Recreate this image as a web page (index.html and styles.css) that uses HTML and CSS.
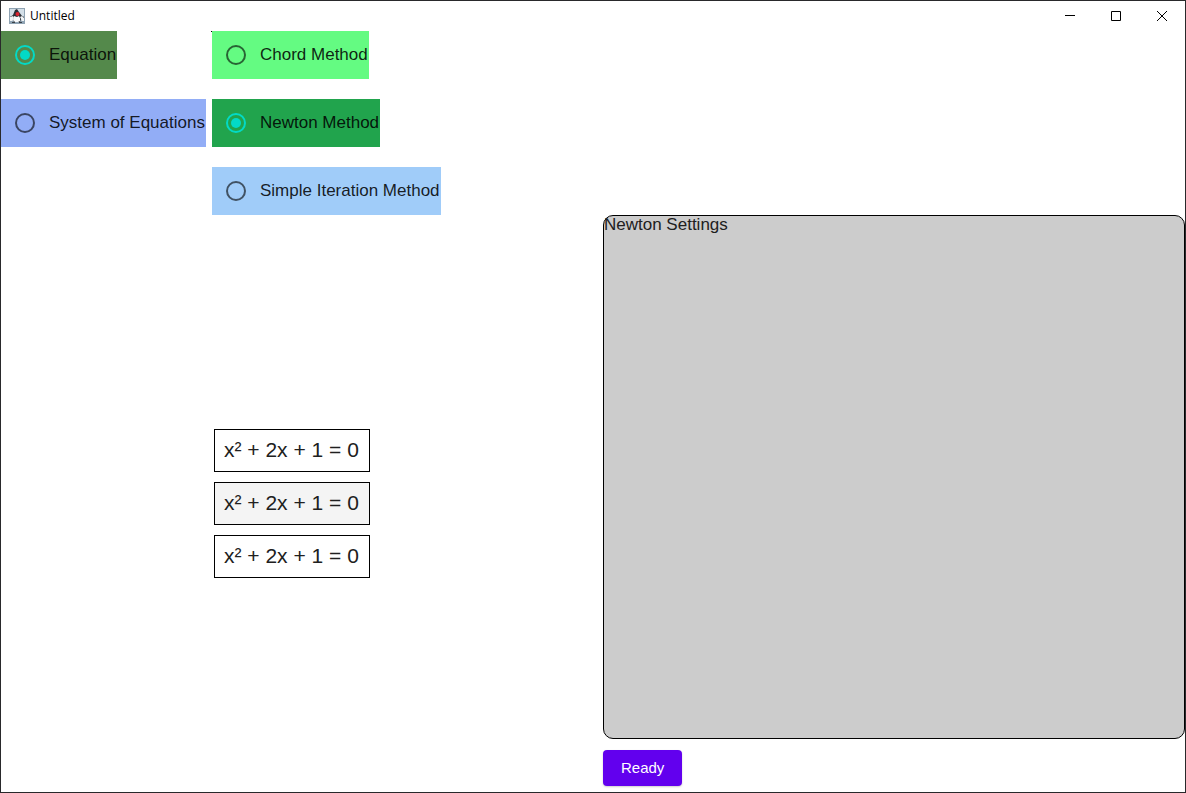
FILE: index.html
```html
<!DOCTYPE html>
<html lang="en">
<head>
<meta charset="utf-8">
<title>Untitled</title>
<link rel="stylesheet" href="styles.css">
</head>
<body>
<div class="window">
  <header class="titlebar">
    <svg class="app-icon" viewBox="0 0 16 16" aria-hidden="true">
      <rect width="16" height="16" fill="#8fa3b3"/>
      <rect x="1" y="1" width="14" height="7" fill="#d3dfe8"/>
      <rect x="1" y="8" width="14" height="5" fill="#b4c2cd"/>
      <path d="M6 2l2-1 2 3 3 4 2 1v3l-3-1-1 3H5l-1-3-3 1V9l3-2z" fill="#2a2f36"/>
      <path d="M5 8l3 1 2-1 1 2v3l-2 1H6l-2-2z" fill="#f7f9fa"/>
      <path d="M1 9l3-1 1 2-2 3H1zM11 9l2-1 2 2v3h-2z" fill="#f1f4f6"/>
      <circle cx="8.500" cy="6" r="2" fill="#dc2330"/>
      <path d="M3 14h3v1H3zM10 14h3v1h-3z" fill="#3a4148"/>
    </svg>
    <h1 class="title">Untitled</h1>
    <div class="window-controls">
      <button class="window-button" type="button" aria-label="Minimize"><svg viewBox="0 0 12 12"><path d="M1 5.500h10"/></svg></button>
      <button class="window-button" type="button" aria-label="Maximize"><svg viewBox="0 0 12 12"><path d="M1.500 1.500h9v9h-9z"/></svg></button>
      <button class="window-button" type="button" aria-label="Close"><svg viewBox="0 0 12 12"><path d="M1 1l10 10M11 1 1 11"/></svg></button>
    </div>
  </header>
  <main class="content">
    <section class="choices">
      <div class="options" role="radiogroup" aria-label="Problem type">
        <label class="option option-equation"><input class="radio" type="radio" name="problem" checked><span>Equation</span></label>
        <label class="option option-system"><input class="radio" type="radio" name="problem"><span>System of Equations</span></label>
      </div>
      <div class="options options-method" role="radiogroup" aria-label="Method">
        <label class="option option-chord"><input class="radio" type="radio" name="method"><span>Chord Method</span></label>
        <label class="option option-newton"><input class="radio" type="radio" name="method" checked><span>Newton Method</span></label>
        <label class="option option-iteration"><input class="radio" type="radio" name="method"><span>Simple Iteration Method</span></label>
      </div>
      <div class="equations">
        <button class="equation" type="button">x² + 2x + 1 = 0</button>
        <button class="equation equation-hover" type="button">x² + 2x + 1 = 0</button>
        <button class="equation" type="button">x² + 2x + 1 = 0</button>
      </div>
    </section>
    <section class="settings">
      <div class="panel">Newton Settings</div>
      <button class="ready" type="button">Ready</button>
    </section>
  </main>
</div>
</body>
</html>
```
FILE: styles.css
```css
* {
  box-sizing: border-box;
}

body {
  margin: 0;
  background: #fff;
  color: #202020;
  font: 17px/24px "Liberation Sans", Arial, sans-serif;
}

button {
  font: inherit;
  color: inherit;
}

.window {
  display: flex;
  flex-direction: column;
  min-height: 100vh;
  border: 1px solid #29292b;
}

.titlebar {
  display: flex;
  align-items: center;
  height: 30px;
  padding-left: 8px;
  gap: 5px;
}

.app-icon {
  width: 16px;
  height: 16px;
}

.title {
  margin: 0;
  color: #000;
  font: 12px/16px "Open Sans", sans-serif;
}

.window-controls {
  display: flex;
  margin-left: auto;
}

.window-button {
  display: grid;
  place-items: center;
  width: 46px;
  height: 28px;
  padding: 0;
  border: 0;
  background: none;
}

.window-button svg {
  width: 12px;
  height: 12px;
  fill: none;
  stroke: #000;
}

.content {
  display: grid;
  grid-template-columns: 1fr 1fr;
  flex: 1;
}

.choices {
  display: grid;
  grid-template-columns: 205px 1fr;
  grid-template-rows: auto 1fr;
  column-gap: 6px;
}

.options {
  display: flex;
  flex-direction: column;
  align-items: flex-start;
  gap: 20px;
}

.options-method {
  position: relative;
}

.options-method::before {
  content: "";
  position: absolute;
  top: 0;
  left: -1px;
  width: 1px;
  height: 1px;
  background: #000;
}

.option {
  display: flex;
  align-items: center;
  height: 48px;
  padding: 0 1px 0 14px;
  gap: 14px;
  color: rgb(0 0 0 / 87%);
  white-space: nowrap;
}

.option-equation { background: #54894b; }
.option-system { background: #92adf6; }
.option-chord { background: #64fb82; }
.option-newton { background: #21a44d; }
.option-iteration { background: #a0ccf9; }

.radio {
  display: grid;
  place-items: center;
  flex: none;
  width: 20px;
  height: 20px;
  margin: 0;
  appearance: none;
  border: 2px solid rgb(0 0 0 / 60%);
  border-radius: 50%;
}

.radio:checked {
  border-color: #03dac6;
}

.radio:checked::before {
  content: "";
  width: 10px;
  height: 10px;
  border-radius: 50%;
  background: #03dac6;
}

.equations {
  grid-column: 2;
  display: flex;
  flex-direction: column;
  align-items: flex-start;
  justify-content: center;
  gap: 10px;
  padding-left: 2px;
}

.equation {
  height: 43px;
  padding: 0 10px 2px 9px;
  border: 1px solid #000;
  background: #fff;
  font-size: 21px;
}

.equation-hover {
  background: #f4f4f4;
}

.settings {
  display: flex;
  flex-direction: column;
  align-items: flex-start;
  gap: 11px;
  padding: 184px 0 6px 10px;
}

.panel {
  flex: 1;
  align-self: stretch;
  border: 1px solid #000;
  border-radius: 10px;
  background: #ccc;
  line-height: 18px;
}

.ready {
  height: 36px;
  padding: 0 18px;
  border: 0;
  border-radius: 4px;
  background: #6200ee;
  box-shadow: 0 1px 2px rgb(0 0 0 / 20%);
  color: #fff;
  font-size: 15px;
}
```
